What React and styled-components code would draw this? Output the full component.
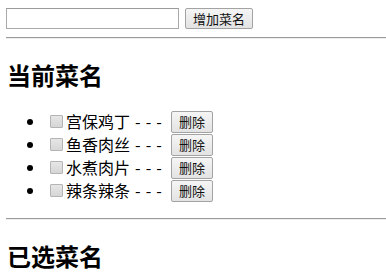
import React from "react";
import styled, { createGlobalStyle } from "styled-components";

const Global = createGlobalStyle`
  html, body { background: #fff; }
  body {
    margin: 8px 0 8px 6px;
    font-family: "Noto Sans CJK SC", "Liberation Sans", sans-serif;
    font-size: 16px;
    color: #000;
  }
`;

const AddRow = styled.div`
  display: flex;
  align-items: center;
  gap: 6px;
  height: 21px;
`;

const TextInput = styled.input`
  box-sizing: border-box;
  width: 173px;
  height: 21px;
  margin: 0;
  border: 1px solid #a9a9a9;
  border-top-color: #9a9a9a;
  background: #fff;
  padding: 1px 2px;
  font: 13px "Noto Sans CJK SC", sans-serif;
`;

const Btn = styled.button`
  box-sizing: border-box;
  height: ${(p) => p.$h || 22}px;
  margin: 0;
  padding: 0 7px;
  border: 1px solid #a3a3a3;
  border-radius: 2px;
  background: linear-gradient(#f5f5f5, #e3e3e3);
  font: 13px/1 "Noto Sans CJK SC", sans-serif;
  color: #111;
  display: inline-flex;
  align-items: center;
  justify-content: center;
`;

const Rule = styled.hr`
  margin: 8px 0;
  border: 0;
  border-top: 1px solid #9a9a9a;
  border-bottom: 1px solid #eeeeee;
  height: 0;
`;

const Heading = styled.h2`
  margin: 20px 0;
  font-size: 24px;
  font-weight: 700;
  line-height: 31px;
  padding-left: 1px;
`;

const List = styled.ul`
  margin: 20px 0 16px;
  padding-left: 40px;
`;

const Item = styled.li`
  height: 23px;
  line-height: 23px;
`;

const ItemInner = styled.span`
  display: inline-flex;
  align-items: center;
  vertical-align: top;
  height: 23px;
`;

const Check = styled.span`
  box-sizing: border-box;
  width: 13px;
  height: 13px;
  margin: 0 3px 0 4px;
  border: 1px solid #b4b4b4;
  border-radius: 1px;
  background: linear-gradient(#e6e6e6, #d6d6d6);
  display: inline-block;
`;

const Label = styled.span`
  white-space: pre;
  word-spacing: 1.5px;
  margin-right: 4px;
`;

const dishes = ["宫保鸡丁", "鱼香肉丝", "水煮肉片", "辣条辣条"];

export default function App() {
  return (
    <>
      <Global />
      <AddRow>
        <TextInput type="text" />
        <Btn $h={21}>增加菜名</Btn>
      </AddRow>
      <Rule />
      <Heading>当前菜名</Heading>
      <List>
        {dishes.map((d) => (
          <Item key={d}>
            <ItemInner>
              <Check />
              <Label>{d + " - - - "}</Label>
              <Btn>删除</Btn>
            </ItemInner>
          </Item>
        ))}
      </List>
      <Rule />
      <Heading>已选菜名</Heading>
    </>
  );
}
